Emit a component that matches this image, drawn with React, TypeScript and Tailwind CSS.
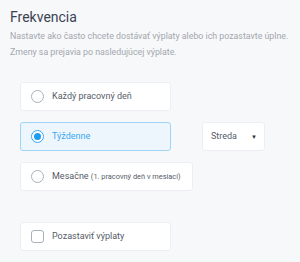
import React from "react";

function Radio({ checked }: { checked?: boolean }) {
  return (
    <span
      className={
        "flex h-[13px] w-[13px] shrink-0 items-center justify-center rounded-full border " +
        (checked ? "border-[#3aa6f2] bg-white" : "border-[#a9b0bb] bg-white")
      }
    >
      {checked && <span className="h-[7px] w-[7px] rounded-full bg-[#1e9cf0]" />}
    </span>
  );
}

export default function App() {
  return (
    <div
      className="h-[262px] w-[300px] bg-[#f7f8fa] px-[10px] pt-[8px]"
      style={{ fontFamily: "Roboto, 'Noto Sans', sans-serif" }}
    >
      <h2 className="text-[14px] leading-[18px] text-[#3b4352]">Frekvencia</h2>
      <p className="mt-[2px] whitespace-nowrap text-[8.8px] leading-[16px] text-[#a3a7ad]">
        Nastavte ako často chcete dostávať výplaty alebo ich pozastavte úplne.
        <br />
        Zmeny sa prejavia po nasledujúcej výplate.
      </p>

      <div className="mt-[22px] flex flex-col gap-[11px] pl-[10px]">
        <div className="flex h-[29px] w-[151px] items-center gap-[8px] rounded-[3px] border border-[#eceef1] bg-white pl-[10px]">
          <Radio />
          <span className="text-[9px] text-[#555c68]">Každý pracovný deň</span>
        </div>

        <div className="flex items-center gap-[31px]">
          <div className="flex h-[29px] w-[151px] items-center gap-[8px] rounded-[3px] border border-[#9fd4f7] bg-[#eef6fd] pl-[10px]">
            <Radio checked />
            <span className="text-[9px] text-[#3aa6f2]">Týždenne</span>
          </div>
          <div className="flex h-[29px] w-[63px] items-center justify-between rounded-[3px] border border-[#eceef1] bg-white pl-[8px] pr-[7px]">
            <span className="text-[9px] text-[#555c68]">Streda</span>
            <span className="text-[6px] text-[#333]">▼</span>
          </div>
        </div>

        <div className="flex h-[29px] w-[173px] items-center gap-[8px] rounded-[3px] border border-[#eceef1] bg-white pl-[10px]">
          <Radio />
          <span className="text-[9px] text-[#555c68]">
            Mesačne <span className="text-[7.4px]">(1. pracovný deň v mesiaci)</span>
          </span>
        </div>

        <div className="mt-[20px] flex h-[29px] w-[151px] items-center gap-[8px] rounded-[3px] border border-[#eceef1] bg-white pl-[10px]">
          <span className="h-[13px] w-[13px] shrink-0 rounded-[3px] border border-[#a9b0bb] bg-white" />
          <span className="text-[9px] text-[#555c68]">Pozastaviť výplaty</span>
        </div>
      </div>
    </div>
  );
}
